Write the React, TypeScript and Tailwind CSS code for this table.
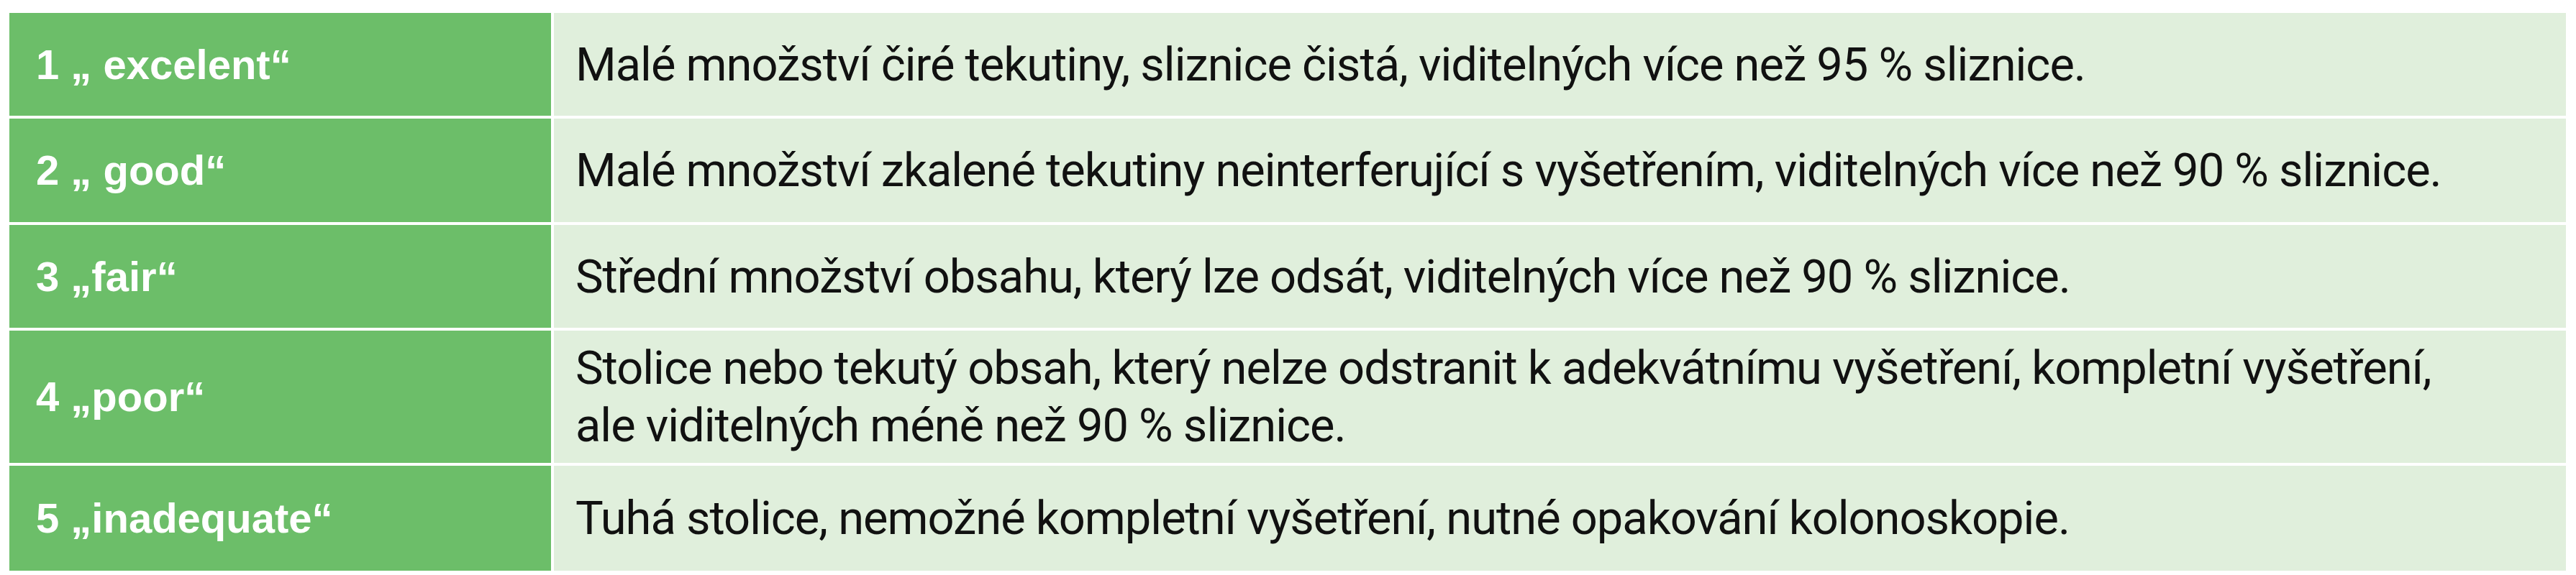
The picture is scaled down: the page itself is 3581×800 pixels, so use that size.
import React from 'react';

type Row = {
  label: string;
  lines: string[];
  height: string;
};

const rows: Row[] = [
  {
    label: '1 „ excelent“',
    lines: ['Malé množství čiré tekutiny, sliznice čistá, viditelných více než 95 % sliznice.'],
    height: 'h-[143px]',
  },
  {
    label: '2 „ good“',
    lines: ['Malé množství zkalené tekutiny neinterferující s vyšetřením, viditelných více než 90 % sliznice.'],
    height: 'h-[144px]',
  },
  {
    label: '3 „fair“',
    lines: ['Střední množství obsahu, který lze odsát, viditelných více než 90 % sliznice.'],
    height: 'h-[143px]',
  },
  {
    label: '4 „poor“',
    lines: [
      'Stolice nebo tekutý obsah, který nelze odstranit k adekvátnímu vyšetření, kompletní vyšetření,',
      'ale viditelných méně než 90 % sliznice.',
    ],
    height: 'h-[184px]',
  },
  {
    label: '5 „inadequate“',
    lines: ['Tuhá stolice, nemožné kompletní vyšetření, nutné opakování kolonoskopie.'],
    height: 'h-[146px]',
  },
];

export default function App() {
  return (
    <div className="w-[3581px] h-[800px] bg-white pt-[18px] pl-[13px]">
      <div className="w-[3554px] flex flex-col gap-[4px]">
        {rows.map((row) => (
          <div key={row.label} className={`flex gap-[4px] ${row.height}`}>
            <div className="w-[753px] shrink-0 bg-[#6cbe69] flex items-center pl-[37px]">
              <span className="font-['Liberation_Sans',Arial,sans-serif] font-bold text-[58px] leading-none text-white">
                {row.label}
              </span>
            </div>
            <div className="flex-1 bg-[#e0efdc] flex items-center pl-[30px]">
              <p className="font-['Roboto',Arial,sans-serif] text-[65px] leading-[80px] tracking-[-1px] text-[#111111] whitespace-nowrap">
                {row.lines.map((line, i) => (
                  <React.Fragment key={i}>
                    {i > 0 && <br />}
                    {line}
                  </React.Fragment>
                ))}
              </p>
            </div>
          </div>
        ))}
      </div>
    </div>
  );
}
